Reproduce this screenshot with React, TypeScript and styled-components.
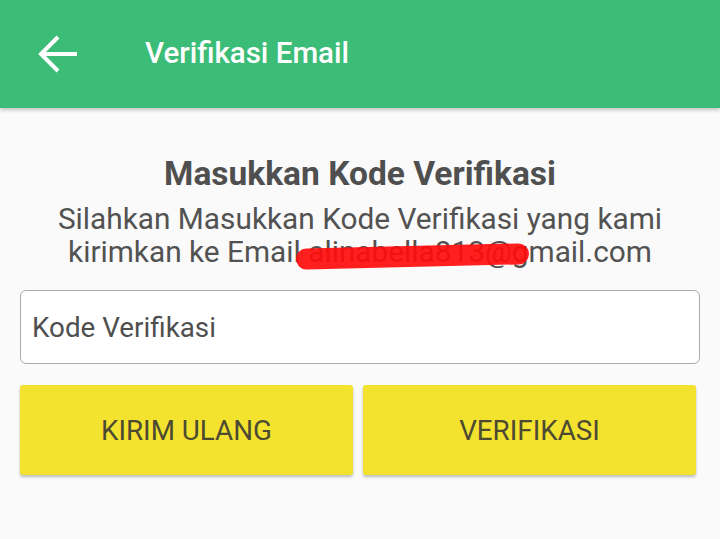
import styled, { createGlobalStyle } from 'styled-components';

const GlobalStyle = createGlobalStyle`
  html, body {
    margin: 0;
    padding: 0;
    background: #fafafa;
    font-family: Roboto, "Noto Sans", sans-serif;
  }
`;

const Screen = styled.div`
  width: 720px;
  height: 539px;
  background: #fafafa;
  overflow: hidden;
`;

const AppBar = styled.header`
  height: 108px;
  background: #3cbd77;
  display: flex;
  align-items: center;
  padding-left: 36px;
  box-shadow: 0 2px 4px rgba(0, 0, 0, 0.22);
  position: relative;
  z-index: 1;
`;

const BackButton = styled.button`
  border: 0;
  background: none;
  padding: 0;
  width: 44px;
  height: 44px;
  display: flex;
  align-items: center;
  justify-content: center;
  margin-right: 65px;
  margin-top: -1px;
`;

const Title = styled.h1`
  margin: 0;
  color: #fff;
  font-size: 29.5px;
  font-weight: 500;
  margin-top: -2px;
`;

const Content = styled.main`
  padding: 46px 20px 0 20px;
  display: flex;
  flex-direction: column;
`;

const Heading = styled.h2`
  margin: 0;
  text-align: center;
  color: #4f4f4f;
  font-size: 33.5px;
  font-weight: 700;
  line-height: 40px;
`;

const Message = styled.p`
  margin: 8px 0 0;
  text-align: center;
  color: #525252;
  font-size: 29.8px;
  line-height: 33px;
  white-space: nowrap;
`;

const Email = styled.span`
  position: relative;
  display: inline-block;
`;

// coretan merah yang menutupi alamat email
const Scribble = styled.span`
  position: absolute;
  display: block;
  left: -12px;
  top: 11px;
  width: 233px;
  height: 21px;
  border-radius: 11px;
  background: rgba(255, 12, 12, 0.92);
  transform: rotate(-1.4deg);
  pointer-events: none;
`;

const Input = styled.input`
  margin-top: 22px;
  height: 74px;
  box-sizing: border-box;
  border: 1px solid #ababab;
  border-radius: 6px;
  background: #fff;
  padding: 0 11px;
  font-family: Roboto, "Noto Sans", sans-serif;
  font-size: 27.8px;
  color: #4f4f4f;
  outline: none;

  &::placeholder {
    color: #4f4f4f;
  }
`;

const Actions = styled.div`
  margin-top: 21px;
  display: grid;
  grid-template-columns: 333px 333px;
  gap: 10px;
`;

const ActionButton = styled.button`
  height: 90px;
  border: 0;
  border-radius: 3px;
  background: #f3e22e;
  box-shadow: 0 2px 3px rgba(0, 0, 0, 0.25);
  font-family: Roboto, "Noto Sans", sans-serif;
  font-size: 27.8px;
  color: #4d4a32;
  text-transform: uppercase;
`;

export default function App() {
  return (
    <Screen>
      <GlobalStyle />
      <AppBar>
        <BackButton aria-label="Kembali">
          <svg width="42" height="40" viewBox="0 0 42 40">
            <path
              d="M40 20H4M21 3L4 20l17 17"
              fill="none"
              stroke="#fff"
              strokeWidth="4"
            />
          </svg>
        </BackButton>
        <Title>Verifikasi Email</Title>
      </AppBar>
      <Content>
        <Heading>Masukkan Kode Verifikasi</Heading>
        <Message>
          Silahkan Masukkan Kode Verifikasi yang kami
          <br />
          kirimkan ke Email{' '}
          <Email>
            alinabella813@gmail.com
            <Scribble />
          </Email>
        </Message>
        <Input placeholder="Kode Verifikasi" />
        <Actions>
          <ActionButton>Kirim Ulang</ActionButton>
          <ActionButton>Verifikasi</ActionButton>
        </Actions>
      </Content>
    </Screen>
  );
}
